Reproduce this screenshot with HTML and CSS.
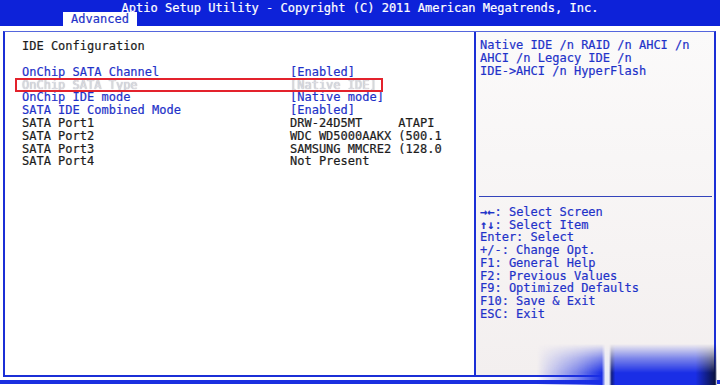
FILE: index.html
```html
<!DOCTYPE html>
<html>
<head>
<meta charset="utf-8">
<link rel="stylesheet" href="styles.css">
</head>
<body>
<div class="topbar">
  <div class="title">Aptio Setup Utility - Copyright (C) 2011 American Megatrends, Inc.</div>
  <div class="tab">Advanced</div>
</div>
<div class="frame">
  <div class="left">
    <div class="header">IDE Configuration</div>
    <div class="row sel"><span>OnChip SATA Channel</span><span>[Enabled]</span></div>
    <div class="row ghost"><span>OnChip SATA Type</span><span>[Native IDE]</span></div>
    <div class="row sel"><span>OnChip IDE mode</span><span>[Native mode]</span></div>
    <div class="row sel"><span>SATA IDE Combined Mode</span><span>[Enabled]</span></div>
    <div class="row"><span>SATA Port1</span><span>DRW-24D5MT     ATAPI</span></div>
    <div class="row"><span>SATA Port2</span><span>WDC WD5000AAKX (500.1</span></div>
    <div class="row"><span>SATA Port3</span><span>SAMSUNG MMCRE2 (128.0</span></div>
    <div class="row"><span>SATA Port4</span><span>Not Present</span></div>
  </div>
  <div class="right">
    <div class="help">
      <div class="line">Native IDE /n RAID /n AHCI /n</div>
      <div class="line">AHCI /n Legacy IDE /n</div>
      <div class="line">IDE-&gt;AHCI /n HyperFlash</div>
    </div>
    <div class="rule"></div>
    <div class="keys">
      <div class="line"><b>→←</b>: Select Screen</div>
      <div class="line"><b>↑↓</b>: Select Item</div>
      <div class="line">Enter: Select</div>
      <div class="line">+/-: Change Opt.</div>
      <div class="line">F1: General Help</div>
      <div class="line">F2: Previous Values</div>
      <div class="line">F9: Optimized Defaults</div>
      <div class="line">F10: Save &amp; Exit</div>
      <div class="line">ESC: Exit</div>
    </div>
  </div>
</div>
<div class="bottombar"></div>
<div class="smudge"></div>
</body>
</html>
```
FILE: styles.css
```css
html, body {
  margin: 0;
  padding: 0;
}
body {
  width: 720px;
  height: 385px;
  overflow: hidden;
  position: relative;
  background: #ffffff;
  font-family: "DejaVu Sans Mono", "Liberation Mono", monospace;
  font-size: 12px;
  color: #1c1c1c;
  -webkit-text-stroke: 0.2px currentColor;
}
.topbar {
  height: 26px;
  background: #0d22d9;
  color: #ffffff;
}
.title {
  height: 12px;
  line-height: 16px;
  text-align: center;
  white-space: pre;
}
.tab {
  margin-left: 63px;
  width: 74px;
  height: 14px;
  line-height: 14px;
  background: #ffffff;
  color: #1f32c9;
  text-align: center;
}
.frame {
  margin: 5px 4px 0 3px;
  height: 343px;
  border: 2px solid #1b2fd6;
  border-top: 1px solid #5566dd;
  display: flex;
}
.left {
  width: 471px;
  border-right: 2px solid #1b2fd6;
  padding: 8px 0 0 17px;
  box-sizing: border-box;
}
.header {
  line-height: 12.8px;
  margin-bottom: 13px;
  color: #1c1c1c;
}
.row {
  display: grid;
  grid-template-columns: 268px 1fr;
  width: 361px;
  line-height: 12.8px;
  color: #1c1c1c;
}
.row span {
  white-space: pre;
}
.row.sel {
  color: #1f32c9;
}
.row.ghost {
  position: relative;
  color: #dcdce2;
  -webkit-text-stroke: 0;
  text-shadow: 0 0 1px #9a9aa6;
}
.row.ghost::after {
  content: "";
  position: absolute;
  left: -7px;
  right: 0;
  top: -1px;
  bottom: -1px;
  border: 2px solid #e3222c;
}
.right {
  flex: 1;
  display: flex;
  flex-direction: column;
  background: linear-gradient(to bottom, #fbfafa, #f3efef);
  color: #1f32c9;
}
.help {
  height: 164px;
  box-sizing: border-box;
  padding: 7px 0 0 4px;
}
.help .line {
  line-height: 13.2px;
  white-space: pre;
}
.rule {
  height: 1px;
  background: #3344bb;
  margin: 0 2px 0 3px;
}
.keys {
  padding: 9px 0 0 4px;
}
.keys .line {
  line-height: 12.7px;
  white-space: pre;
}
.keys b {
  font-weight: bold;
}
.bottombar {
  margin-top: 3px;
  height: 4px;
  background: #1a2fe0;
}
.smudge {
  position: absolute;
  left: 537px;
  top: 344px;
  width: 180px;
  height: 41px;
  background: linear-gradient(to right,
    rgba(26, 46, 230, 0) 0%,
    rgba(26, 46, 230, 0.55) 22%,
    #1a2ee6 36%,
    #e9ecf8 38%,
    #e9ecf8 40%,
    #0f1c80 41.5%,
    #1a2ee6 43.5%,
    #1a2ee6 88%,
    #0a1240 99%,
    #ffffff 100%);
  -webkit-mask-image: linear-gradient(to bottom, rgba(0,0,0,0) 0%, rgba(0,0,0,0.55) 35%, #000 70%);
  mask-image: linear-gradient(to bottom, rgba(0,0,0,0) 0%, rgba(0,0,0,0.55) 35%, #000 70%);
}
```
